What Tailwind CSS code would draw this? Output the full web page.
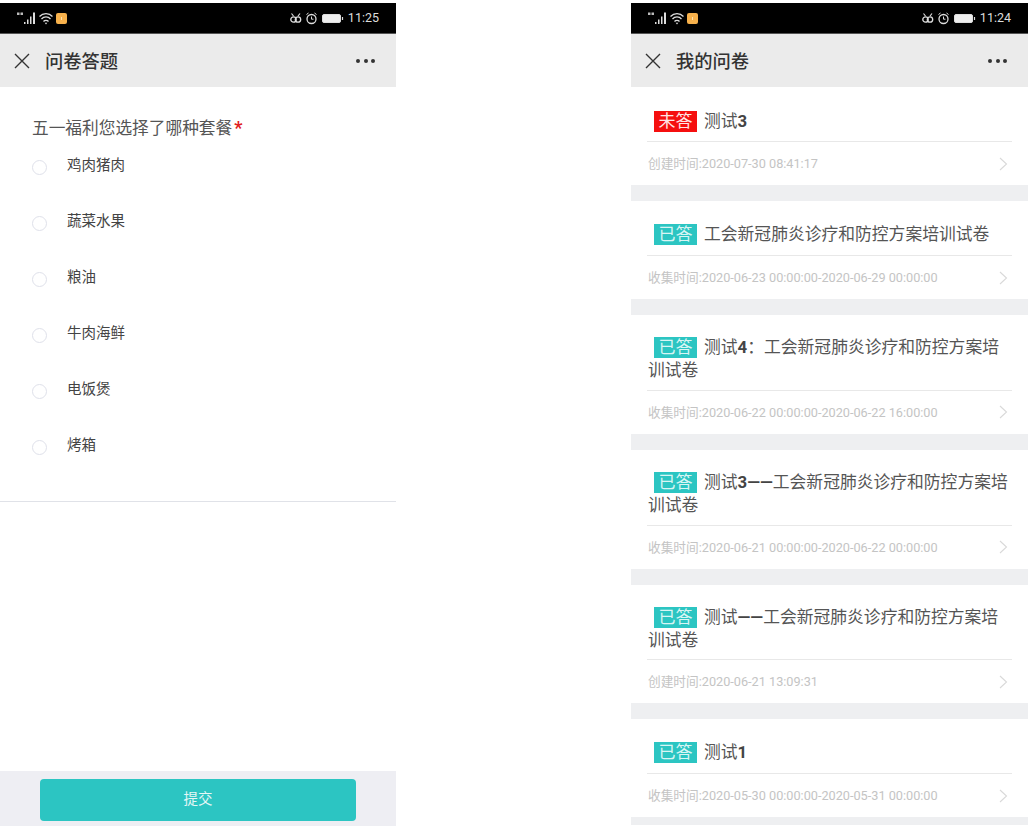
<!DOCTYPE html>
<html lang="zh-CN">
<head>
  <meta charset="UTF-8" />
  <title>问卷</title>
  <script src="https://cdn.jsdelivr.net/npm/@tailwindcss/browser@4"></script>
</head>
<body class="bg-white h-[839px] overflow-hidden font-['Roboto','Noto_Sans_CJK_SC',sans-serif]">
  <div class="flex justify-between pt-[3px] pr-[3px]">

    <!-- 问卷答题 -->
    <div class="w-[396px] h-[823px] flex flex-col">
      <div class="h-[31px] bg-black flex items-center justify-between pl-[17px] pr-[17px] pt-[1px] border-b border-[#555]">
        <div class="flex items-center gap-[3px]">
          <svg width="36" height="13" viewBox="0 0 36 13">
            <path d="M0 0.500h2.500v2.500H0zM3.500 0.500H6v2.500H3.500z" fill="#bbb"/>
            <path d="M7 12h1.500v-2H7zM10 12h1.500V7.500H10zM13 12h1.500V4.500H13zM16 12h2V0.500h-2z" fill="#ddd"/>
            <path d="M22.500 4.500a9 9 0 0 1 13 0M24.500 7a6 6 0 0 1 9 0M26.500 9.500a3.200 3.200 0 0 1 5 0" fill="none" stroke="#ddd" stroke-width="1.300"/>
            <path d="M29 12.500l-1.300-1.700h2.600z" fill="#ddd"/>
          </svg>
          <span class="w-[11px] h-[11px] rounded-[2px] bg-[#f7b14c] flex items-center justify-center"><span class="w-[1px] h-[3px] bg-[#fde3b0]"></span></span>
        </div>
        <div class="flex items-center gap-[4px] text-[#ddd] text-[12.500px]">
          <svg width="54" height="13" viewBox="0 0 54 13" fill="none" stroke="#ddd">
            <circle cx="3.500" cy="7.500" r="2.700" stroke-width="1.300"/><circle cx="8" cy="7.500" r="2.700" stroke-width="1.300"/><path d="M1.500 1.500l2 2.500M10 1.500L8 4" stroke-width="1.200"/>
            <circle cx="21.500" cy="7" r="4.500" stroke-width="1.300"/><path d="M21.500 4.500v2.700h2M16.500 2.500l2-1.500M26.500 2.500l-2-1.500" stroke-width="1"/>
            <rect x="32.500" y="2.500" width="18" height="8" rx="1.500" fill="#eee" stroke-width="1"/>
            <path d="M52.500 5v3" stroke-width="1.200"/>
          </svg>
          <span>11:25</span>
        </div>
      </div>
      <div class="h-[53px] bg-[#ebebeb] flex items-center justify-between pl-[14px] pr-[21px]">
        <div class="flex items-center gap-[15px]">
          <svg width="16" height="16" viewBox="0 0 16 16"><path d="M1 1l14 14M15 1L1 15" stroke="#333" stroke-width="1.400" fill="none"/></svg>
          <span class="text-[18.300px] font-medium text-[#333] mt-[2px]">问卷答题</span>
        </div>
        <div class="flex gap-[3.500px]">
          <span class="w-[4px] h-[4px] rounded-full bg-[#333]"></span>
          <span class="w-[4px] h-[4px] rounded-full bg-[#333]"></span>
          <span class="w-[4px] h-[4px] rounded-full bg-[#333]"></span>
        </div>
      </div>

      <div class="h-[415px] border-b border-[#e0e2e8] pl-[32px] pt-[30px]">
        <p class="text-[16.700px] leading-[24px] text-[#555]">五一福利您选择了哪种套餐<span class="ml-[2px] text-[18px] leading-[18px] text-[#e02020] font-bold">*</span></p>
        <ul class="flex flex-col gap-[36px] mt-[15px] text-[14.500px] leading-[20px] text-[#444]">
          <li class="flex items-center gap-[20px]"><span class="w-[15px] h-[15px] mt-[2px] rounded-full border border-[#dfe1ea]"></span>鸡肉猪肉</li>
          <li class="flex items-center gap-[20px]"><span class="w-[15px] h-[15px] mt-[2px] rounded-full border border-[#dfe1ea]"></span>蔬菜水果</li>
          <li class="flex items-center gap-[20px]"><span class="w-[15px] h-[15px] mt-[2px] rounded-full border border-[#dfe1ea]"></span>粮油</li>
          <li class="flex items-center gap-[20px]"><span class="w-[15px] h-[15px] mt-[2px] rounded-full border border-[#dfe1ea]"></span>牛肉海鲜</li>
          <li class="flex items-center gap-[20px]"><span class="w-[15px] h-[15px] mt-[2px] rounded-full border border-[#dfe1ea]"></span>电饭煲</li>
          <li class="flex items-center gap-[20px]"><span class="w-[15px] h-[15px] mt-[2px] rounded-full border border-[#dfe1ea]"></span>烤箱</li>
        </ul>
      </div>

      <div class="mt-auto h-[55px] bg-[#eeeef3] px-[40px] pt-[8px]">
        <div class="h-[42px] rounded-[4px] bg-[#2cc5c2] flex items-center justify-center text-[14.500px] text-[#e6f7f6]">提交</div>
      </div>
    </div>

    <!-- 我的问卷 -->
    <div class="w-[397px] h-[822px] flex flex-col overflow-hidden">
      <div class="h-[31px] shrink-0 bg-black flex items-center justify-between pl-[17px] pr-[17px] pt-[1px] border-b border-[#555]">
        <div class="flex items-center gap-[3px]">
          <svg width="36" height="13" viewBox="0 0 36 13">
            <path d="M0 0.500h2.500v2.500H0zM3.500 0.500H6v2.500H3.500z" fill="#bbb"/>
            <path d="M7 12h1.500v-2H7zM10 12h1.500V7.500H10zM13 12h1.500V4.500H13zM16 12h2V0.500h-2z" fill="#ddd"/>
            <path d="M22.500 4.500a9 9 0 0 1 13 0M24.500 7a6 6 0 0 1 9 0M26.500 9.500a3.200 3.200 0 0 1 5 0" fill="none" stroke="#ddd" stroke-width="1.300"/>
            <path d="M29 12.500l-1.300-1.700h2.600z" fill="#ddd"/>
          </svg>
          <span class="w-[11px] h-[11px] rounded-[2px] bg-[#f7b14c] flex items-center justify-center"><span class="w-[1px] h-[3px] bg-[#fde3b0]"></span></span>
        </div>
        <div class="flex items-center gap-[4px] text-[#ddd] text-[12.500px]">
          <svg width="54" height="13" viewBox="0 0 54 13" fill="none" stroke="#ddd">
            <circle cx="3.500" cy="7.500" r="2.700" stroke-width="1.300"/><circle cx="8" cy="7.500" r="2.700" stroke-width="1.300"/><path d="M1.500 1.500l2 2.500M10 1.500L8 4" stroke-width="1.200"/>
            <circle cx="21.500" cy="7" r="4.500" stroke-width="1.300"/><path d="M21.500 4.500v2.700h2M16.500 2.500l2-1.500M26.500 2.500l-2-1.500" stroke-width="1"/>
            <rect x="32.500" y="2.500" width="18" height="8" rx="1.500" fill="#eee" stroke-width="1"/>
            <path d="M52.500 5v3" stroke-width="1.200"/>
          </svg>
          <span>11:24</span>
        </div>
      </div>
      <div class="h-[53px] shrink-0 bg-[#ebebeb] flex items-center justify-between pl-[14px] pr-[21px]">
        <div class="flex items-center gap-[15px]">
          <svg width="16" height="16" viewBox="0 0 16 16"><path d="M1 1l14 14M15 1L1 15" stroke="#333" stroke-width="1.400" fill="none"/></svg>
          <span class="text-[18.300px] font-medium text-[#333] mt-[2px]">我的问卷</span>
        </div>
        <div class="flex gap-[3.500px]">
          <span class="w-[4px] h-[4px] rounded-full bg-[#333]"></span>
          <span class="w-[4px] h-[4px] rounded-full bg-[#333]"></span>
          <span class="w-[4px] h-[4px] rounded-full bg-[#333]"></span>
        </div>
      </div>

      <div class="flex flex-col gap-[16px] bg-[#eeeff1] flex-1">
        <div class="bg-white pl-[17px] pr-[16px]">
          <div class="h-[55px] pt-[23px] -ml-px pl-px text-[16.800px] leading-[23px] text-[#555] border-b border-[#e8e8e8] indent-[6px]"><span class="inline-block indent-0 w-[43px] h-[21px] leading-[21px] text-center text-[17px] bg-[#f50f0f] text-[#ffe5e5] mr-[7px]">未答</span>测试<b class="text-[#444]">3</b></div>
          <div class="h-[43px] flex items-center justify-between text-[12.700px] text-[#c4c4c4] pr-[4px]"><span>创建时间:2020-07-30 08:41:17</span>
            <svg width="9" height="14" viewBox="0 0 9 14"><path d="M1 1l6.500 6L1 13" fill="none" stroke="#d9d9d9" stroke-width="1.100"/></svg></div>
        </div>
        <div class="bg-white pl-[17px] pr-[16px]">
          <div class="h-[55px] pt-[22px] -ml-px pl-px text-[16.800px] leading-[23px] text-[#555] border-b border-[#e8e8e8] indent-[6px]"><span class="inline-block indent-0 w-[43px] h-[21px] leading-[21px] text-center text-[17px] bg-[#2cc5c2] text-[#d9f5f4] mr-[7px]">已答</span>工会新冠肺炎诊疗和防控方案培训试卷</div>
          <div class="h-[43px] flex items-center justify-between text-[12.700px] text-[#c4c4c4] pr-[4px]"><span>收集时间:2020-06-23 00:00:00-2020-06-29 00:00:00</span>
            <svg width="9" height="14" viewBox="0 0 9 14"><path d="M1 1l6.500 6L1 13" fill="none" stroke="#d9d9d9" stroke-width="1.100"/></svg></div>
        </div>
        <div class="bg-white pl-[17px] pr-[16px]">
          <div class="h-[75.700px] pt-[21px] -ml-px pl-px text-[16.800px] leading-[23px] text-[#555] border-b border-[#e8e8e8] indent-[6px]"><span class="inline-block indent-0 w-[43px] h-[21px] leading-[21px] text-center text-[17px] bg-[#2cc5c2] text-[#d9f5f4] mr-[7px]">已答</span>测试<b class="text-[#444]">4</b>：工会新冠肺炎诊疗和防控方案培训试卷</div>
          <div class="h-[43px] flex items-center justify-between text-[12.700px] text-[#c4c4c4] pr-[4px]"><span>收集时间:2020-06-22 00:00:00-2020-06-22 16:00:00</span>
            <svg width="9" height="14" viewBox="0 0 9 14"><path d="M1 1l6.500 6L1 13" fill="none" stroke="#d9d9d9" stroke-width="1.100"/></svg></div>
        </div>
        <div class="bg-white pl-[17px] pr-[16px]">
          <div class="h-[76px] pt-[21px] -ml-px pl-px text-[16.800px] leading-[23px] text-[#555] border-b border-[#e8e8e8] indent-[6px]"><span class="inline-block indent-0 w-[43px] h-[21px] leading-[21px] text-center text-[17px] bg-[#2cc5c2] text-[#d9f5f4] mr-[7px]">已答</span>测试<b class="text-[#444]">3——</b>工会新冠肺炎诊疗和防控方案培训试卷</div>
          <div class="h-[43px] flex items-center justify-between text-[12.700px] text-[#c4c4c4] pr-[4px]"><span>收集时间:2020-06-21 00:00:00-2020-06-22 00:00:00</span>
            <svg width="9" height="14" viewBox="0 0 9 14"><path d="M1 1l6.500 6L1 13" fill="none" stroke="#d9d9d9" stroke-width="1.100"/></svg></div>
        </div>
        <div class="bg-white pl-[17px] pr-[16px]">
          <div class="h-[75.700px] pt-[21px] -ml-px pl-px text-[16.800px] leading-[23px] text-[#555] border-b border-[#e8e8e8] indent-[6px]"><span class="inline-block indent-0 w-[43px] h-[21px] leading-[21px] text-center text-[17px] bg-[#2cc5c2] text-[#d9f5f4] mr-[7px]">已答</span>测试<b class="text-[#444]">——</b>工会新冠肺炎诊疗和防控方案培训试卷</div>
          <div class="h-[43px] flex items-center justify-between text-[12.700px] text-[#c4c4c4] pr-[4px]"><span>创建时间:2020-06-21 13:09:31</span>
            <svg width="9" height="14" viewBox="0 0 9 14"><path d="M1 1l6.500 6L1 13" fill="none" stroke="#d9d9d9" stroke-width="1.100"/></svg></div>
        </div>
        <div class="bg-white pl-[17px] pr-[16px]">
          <div class="h-[55px] pt-[22px] -ml-px pl-px text-[16.800px] leading-[23px] text-[#555] border-b border-[#e8e8e8] indent-[6px]"><span class="inline-block indent-0 w-[43px] h-[21px] leading-[21px] text-center text-[17px] bg-[#2cc5c2] text-[#d9f5f4] mr-[7px]">已答</span>测试<b class="text-[#444]">1</b></div>
          <div class="h-[43px] flex items-center justify-between text-[12.700px] text-[#c4c4c4] pr-[4px]"><span>收集时间:2020-05-30 00:00:00-2020-05-31 00:00:00</span>
            <svg width="9" height="14" viewBox="0 0 9 14"><path d="M1 1l6.500 6L1 13" fill="none" stroke="#d9d9d9" stroke-width="1.100"/></svg></div>
        </div>
      </div>
    </div>

  </div>
</body>
</html>
